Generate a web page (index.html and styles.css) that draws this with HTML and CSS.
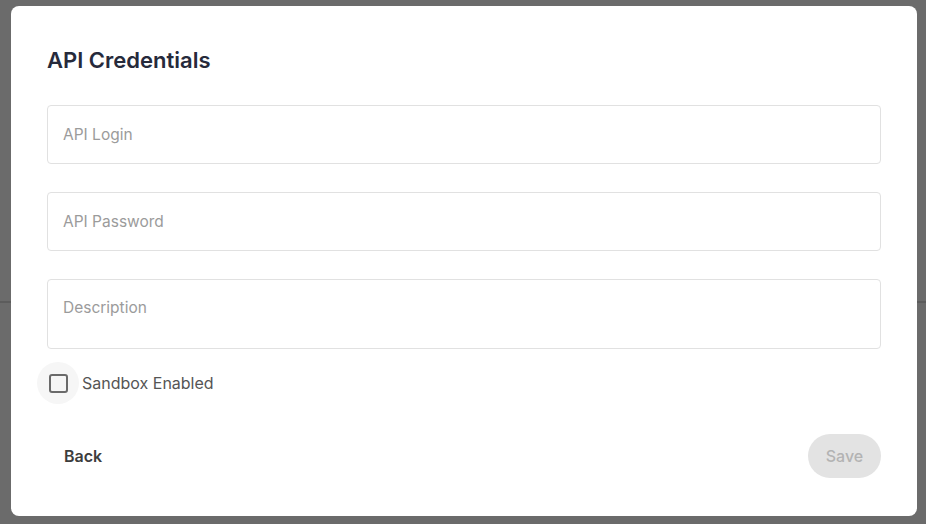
FILE: index.html
```html
<!DOCTYPE html>
<html lang="en">
<head>
<meta charset="utf-8">
<title>API Credentials</title>
<link rel="stylesheet" href="styles.css">
</head>
<body>
<div class="backdrop">
  <div class="bg-line"></div>
  <div class="dialog">
    <h2 class="title">API Credentials</h2>
    <div class="fields">
      <div class="field"><span class="placeholder">API Login</span></div>
      <div class="field"><span class="placeholder">API Password</span></div>
      <div class="field field-multi"><span class="placeholder">Description</span></div>
    </div>
    <label class="check-row">
      <span class="check-ripple"><span class="check-box"></span></span>
      <span class="check-label">Sandbox Enabled</span>
    </label>
    <div class="actions">
      <button class="btn-back">Back</button>
      <button class="btn-save" disabled>Save</button>
    </div>
  </div>
</div>
</body>
</html>
```

FILE: styles.css
```css
* { box-sizing: border-box; }
html, body {
  margin: 0;
  padding: 0;
  width: 926px;
  height: 524px;
  overflow: hidden;
  font-family: Inter, "Noto Sans", "Liberation Sans", sans-serif;
}
.backdrop {
  position: relative;
  width: 926px;
  height: 524px;
  background: #6b6b6b;
  padding: 6px 9px 0 11px;
}
.bg-line {
  position: absolute;
  left: 0;
  right: 0;
  top: 301px;
  height: 2px;
  background: #5c5c5c;
}
.dialog {
  position: relative;
  width: 906px;
  height: 510px;
  background: #ffffff;
  border-radius: 8px;
  padding: 40px 36px 0 36px;
  display: flex;
  flex-direction: column;
}
.title {
  margin: 0;
  font-size: 22px;
  line-height: 28px;
  font-weight: 600;
  color: #262a3b;
}
.fields {
  margin-top: 31px;
  display: flex;
  flex-direction: column;
  gap: 28px;
}
.field {
  height: 59px;
  border: 1px solid #e1e1e1;
  border-radius: 4px;
  padding: 0 15px;
  display: flex;
  align-items: center;
}
.field-multi {
  height: 70px;
  align-items: flex-start;
  padding-top: 19px;
}
.placeholder {
  font-size: 15.5px;
  line-height: 18px;
  color: #9b9b9b;
}
.check-row {
  margin-top: 13px;
  margin-left: -10px;
  display: flex;
  align-items: center;
  height: 42px;
}
.check-ripple {
  width: 42px;
  height: 42px;
  border-radius: 50%;
  background: #f6f6f6;
  display: flex;
  align-items: center;
  justify-content: center;
}
.check-box {
  width: 19px;
  height: 19px;
  border: 2px solid #6a6a6a;
  border-radius: 3px;
}
.check-label {
  margin-left: 3px;
  font-size: 16px;
  color: #555555;
}
.actions {
  margin-top: 30px;
  display: flex;
  justify-content: space-between;
  align-items: center;
  height: 44px;
}
.btn-back {
  font-family: inherit;
  background: none;
  border: none;
  padding: 0 16px;
  margin-left: 1px;
  height: 40px;
  font-size: 16px;
  font-weight: 600;
  color: #3d3d3d;
}
.btn-save {
  font-family: inherit;
  height: 44px;
  width: 73px;
  border: none;
  border-radius: 22px;
  background: #e3e3e3;
  color: #b3b3b3;
  font-size: 16px;
  font-weight: 500;
}
```
